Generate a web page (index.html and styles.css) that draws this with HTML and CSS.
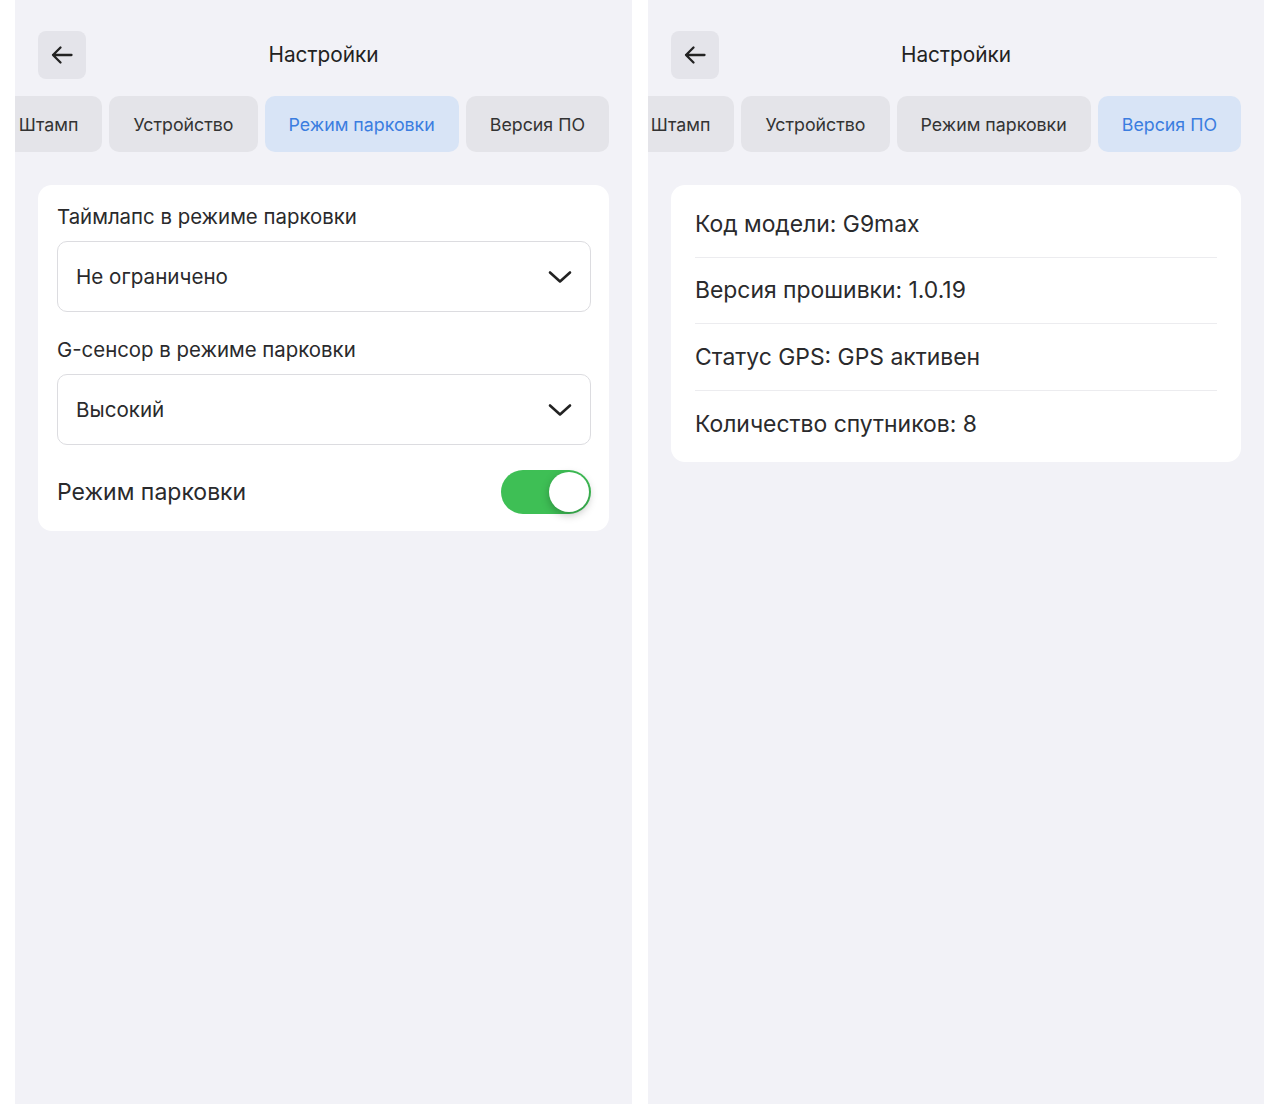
FILE: index.html
```html
<!DOCTYPE html>
<html lang="ru">
<head>
  <meta charset="UTF-8">
  <meta name="viewport" content="width=device-width, initial-scale=1.0">
  <title>Настройки</title>
  <link rel="stylesheet" href="styles.css">
</head>
<body>
  <div class="screen screen-left">
    <div class="header">
      <button class="back-button">
        <svg width="24" height="24" viewBox="0 0 24 24"><path d="M21.5 12H3M10.5 4.5L3 12l7.5 7.5" fill="none" stroke="#222" stroke-width="2.3" stroke-linecap="round" stroke-linejoin="round"/></svg>
      </button>
      <div class="title">Настройки</div>
    </div>
    <div class="tabs">
      <div class="tab">Штамп</div>
      <div class="tab">Устройство</div>
      <div class="tab active">Режим парковки</div>
      <div class="tab">Версия ПО</div>
    </div>
    <div class="card form-card">
      <div class="field-label">Таймлапс в режиме парковки</div>
      <div class="select">
        <span>Не ограничено</span>
        <svg width="24" height="14" viewBox="0 0 24 14"><path d="M2 2.5l10 9 10-9" fill="none" stroke="#222" stroke-width="2.6" stroke-linecap="round" stroke-linejoin="round"/></svg>
      </div>
      <div class="field-label spaced">G-сенсор в режиме парковки</div>
      <div class="select">
        <span>Высокий</span>
        <svg width="24" height="14" viewBox="0 0 24 14"><path d="M2 2.5l10 9 10-9" fill="none" stroke="#222" stroke-width="2.6" stroke-linecap="round" stroke-linejoin="round"/></svg>
      </div>
      <div class="toggle-row">
        <span>Режим парковки</span>
        <div class="toggle on"><div class="knob"></div></div>
      </div>
    </div>
  </div>

  <div class="screen screen-right">
    <div class="header">
      <button class="back-button">
        <svg width="24" height="24" viewBox="0 0 24 24"><path d="M21.5 12H3M10.5 4.5L3 12l7.5 7.5" fill="none" stroke="#222" stroke-width="2.3" stroke-linecap="round" stroke-linejoin="round"/></svg>
      </button>
      <div class="title">Настройки</div>
    </div>
    <div class="tabs">
      <div class="tab">Штамп</div>
      <div class="tab">Устройство</div>
      <div class="tab">Режим парковки</div>
      <div class="tab active">Версия ПО</div>
    </div>
    <div class="card info-card">
      <div class="info-row">Код модели: G9max</div>
      <div class="info-row">Версия прошивки: 1.0.19</div>
      <div class="info-row">Статус GPS: GPS активен</div>
      <div class="info-row">Количество спутников: 8</div>
    </div>
  </div>
</body>
</html>
```

FILE: styles.css
```css
body {
  margin: 0;
  height: 1104px;
  display: flex;
  gap: 16px;
  padding-left: 15px;
  background: #fff;
  font-family: Inter, 'Noto Sans', sans-serif;
  color: #2a2a2c;
  overflow: hidden;
}
.screen {
  background: #f2f2f7;
  padding-top: 31px;
  box-sizing: border-box;
}
.screen-left {
  width: 617px;
}
.screen-right {
  width: 616px;
}
.header {
  display: grid;
  grid-template-columns: 48px 1fr 48px;
  align-items: center;
  padding: 0 23px;
  height: 48px;
}
.back-button {
  width: 48px;
  height: 48px;
  border: none;
  border-radius: 8px;
  background: #e4e4ea;
  display: flex;
  align-items: center;
  justify-content: center;
  padding: 0;
}
.title {
  text-align: center;
  font-size: 20.8px;
  color: #222;
  margin-top: -2px;
}
.tabs {
  display: flex;
  justify-content: flex-end;
  gap: 7px;
  margin-top: 17px;
  padding-right: 23px;
  overflow: hidden;
}
.tab {
  flex-shrink: 0;
  height: 56px;
  line-height: 57px;
  padding: 0 24px;
  border-radius: 10px;
  background: #e4e4e9;
  font-size: 17.8px;
  color: #333;
  white-space: nowrap;
}
.tab.active {
  background: #d8e4f6;
  color: #3b7de0;
}
.card {
  margin: 33px 23px 0;
  background: #fff;
  border-radius: 14px;
}
.form-card {
  padding: 19px 18px 17px 19px;
}
.field-label {
  font-size: 20.4px;
  line-height: 25px;
  color: #2a2a2c;
}
.field-label.spaced {
  margin-top: 25px;
}
.select {
  margin-top: 12px;
  height: 71px;
  box-sizing: border-box;
  border: 1px solid #dcdce0;
  border-radius: 10px;
  display: flex;
  align-items: center;
  justify-content: space-between;
  padding: 0 18px 0 18px;
  font-size: 20.6px;
  color: #2a2a2c;
}
.toggle-row {
  margin-top: 25px;
  height: 44px;
  display: flex;
  align-items: center;
  justify-content: space-between;
  font-size: 23px;
}
.toggle {
  width: 90px;
  height: 44px;
  border-radius: 22px;
  background: #3ebf55;
  position: relative;
}
.knob {
  position: absolute;
  top: 2px;
  right: 2px;
  width: 40px;
  height: 40px;
  border-radius: 50%;
  background: #fff;
  box-shadow: 0 3px 8px rgba(0, 0, 0, 0.25);
}
.info-card {
  padding: 6px 24px 5px;
}
.info-row {
  height: 66.5px;
  display: flex;
  align-items: center;
  font-size: 22.9px;
  color: #2a2a2c;
  border-bottom: 1px solid #ececef;
  box-sizing: border-box;
}
.info-row:last-child {
  border-bottom: none;
}
```
